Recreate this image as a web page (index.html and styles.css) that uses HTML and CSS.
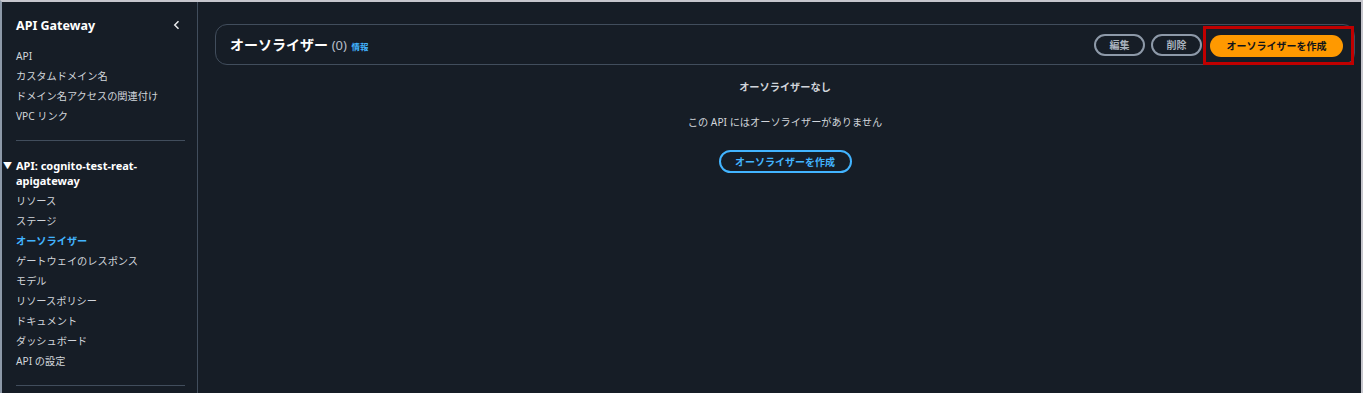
FILE: index.html
```html
<!DOCTYPE html>
<html lang="ja">
  <head>
    <meta charset="UTF-8" />
    <meta name="viewport" content="width=device-width, initial-scale=1.0" />
    <title>オーソライザー | API Gateway</title>
    <link rel="stylesheet" href="styles.css">
  </head>
  <body>
    <div class="frame">
      <nav class="sidebar">
        <div class="side-head">
          <span class="side-title">API Gateway</span>
          <svg class="collapse-icon" viewBox="0 0 16 16" fill="none" stroke="currentColor" stroke-width="2">
            <path d="M10 3 5 8l5 5" />
          </svg>
        </div>
        <ul class="side-list">
          <li>API</li>
          <li>カスタムドメイン名</li>
          <li>ドメイン名アクセスの関連付け</li>
          <li>VPC リンク</li>
        </ul>
        <hr class="side-divider" />
        <div class="api-group">
          <span class="caret">▼</span>
          <span>API: cognito-test-reat-apigateway</span>
        </div>
        <ul class="side-list">
          <li>リソース</li>
          <li>ステージ</li>
          <li class="active">オーソライザー</li>
          <li>ゲートウェイのレスポンス</li>
          <li>モデル</li>
          <li>リソースポリシー</li>
          <li>ドキュメント</li>
          <li>ダッシュボード</li>
          <li>API の設定</li>
        </ul>
        <hr class="side-divider" />
      </nav>

      <main class="main">
        <div class="panel-head">
          <h1 class="panel-title">オーソライザー <span class="count">(0)</span> <a class="info">情報</a></h1>
          <div class="actions">
            <button class="btn-normal">編集</button>
            <button class="btn-normal">削除</button>
            <div class="highlight">
              <button class="btn-primary">オーソライザーを作成</button>
            </div>
          </div>
        </div>

        <div class="empty">
          <p class="empty-title">オーソライザーなし</p>
          <p class="empty-text">この API にはオーソライザーがありません</p>
          <button class="btn-outline">オーソライザーを作成</button>
        </div>
      </main>
    </div>
  </body>
</html>
```

FILE: styles.css
```css
* {
  margin: 0;
  padding: 0;
  box-sizing: border-box;
}
html,
body {
  height: 100%;
  background-color: #161d26;
}
body {
  font-family: "Noto Sans", "Noto Sans CJK JP", sans-serif;
  color: #d1d5db;
  font-size: 10.2px;
}

.frame {
  display: flex;
  height: 393px;
  border-top: 2px solid #c6c6cd;
  border-left: 2px solid #8d99a8;
  border-right: 2px solid #c6c6cd;
}

.sidebar {
  width: 196px;
  flex-shrink: 0;
  border-right: 1px solid #414d5c;
  padding: 14px 12px 0 14px;
}
.side-head {
  display: flex;
  justify-content: space-between;
  align-items: center;
  height: 18px;
  margin-bottom: 12px;
}
.side-title {
  font-size: 12.5px;
  font-weight: 700;
  color: #ffffff;
}
.collapse-icon {
  width: 12px;
  height: 12px;
  color: #e9ebed;
  margin-right: 2px;
}
.side-list {
  list-style: none;
}
.side-list li {
  height: 20px;
  line-height: 20px;
  color: #d1d5db;
  white-space: nowrap;
}
.side-list li.active {
  color: #42b4ff;
  font-weight: 700;
}
.side-divider {
  border: none;
  border-top: 1px solid #414d5c;
  margin: 14px 0 17px 0;
}
.api-group {
  display: flex;
  gap: 4px;
  font-size: 11px;
  font-weight: 700;
  color: #ffffff;
  line-height: 15px;
  margin-left: -13px;
  margin-bottom: 3px;
}
.api-group span:last-child {
  width: 140px;
}
.caret {
  font-size: 9px;
  width: 9px;
}

.main {
  flex: 1;
  padding: 22px 6px 0 17px;
}
.panel-head {
  display: flex;
  justify-content: space-between;
  align-items: center;
  height: 41px;
  border: 1px solid #414d5c;
  border-radius: 12px;
  padding: 0 0 0 14px;
}
.panel-title {
  font-size: 14px;
  font-weight: 700;
  color: #ffffff;
  margin-top: -2px;
}
.count {
  font-weight: 400;
  color: #b6bec9;
  font-size: 13px;
}
.info {
  color: #42b4ff;
  font-size: 8.5px;
  font-weight: 700;
  margin-left: 1px;
}
.actions {
  display: flex;
  align-items: center;
  gap: 6px;
  height: 100%;
}
button {
  font-family: inherit;
  font-weight: 700;
  font-size: 10px;
  height: 22px;
  border-radius: 12px;
  cursor: pointer;
}
.btn-normal {
  width: 51px;
  background: transparent;
  border: 2px solid #8d99a8;
  color: #aab3bf;
}
.highlight {
  height: 39px;
  border: 3px solid #c00000;
  display: flex;
  align-items: center;
  padding: 0 8px 0 4px;
  margin-top: 2px;
  margin-left: -5px;
}
.btn-primary {
  width: 133px;
  background-color: #ff9900;
  border: none;
  color: #0f141a;
}

.empty {
  display: flex;
  flex-direction: column;
  align-items: center;
  padding-top: 14px;
}
.empty-title {
  font-weight: 700;
  color: #d1d5db;
  line-height: 16px;
}
.empty-text {
  margin-top: 19px;
  line-height: 16px;
}
.btn-outline {
  margin-top: 20px;
  width: 133px;
  height: 23px;
  background: transparent;
  border: 2px solid #42b4ff;
  color: #42b4ff;
}
```
